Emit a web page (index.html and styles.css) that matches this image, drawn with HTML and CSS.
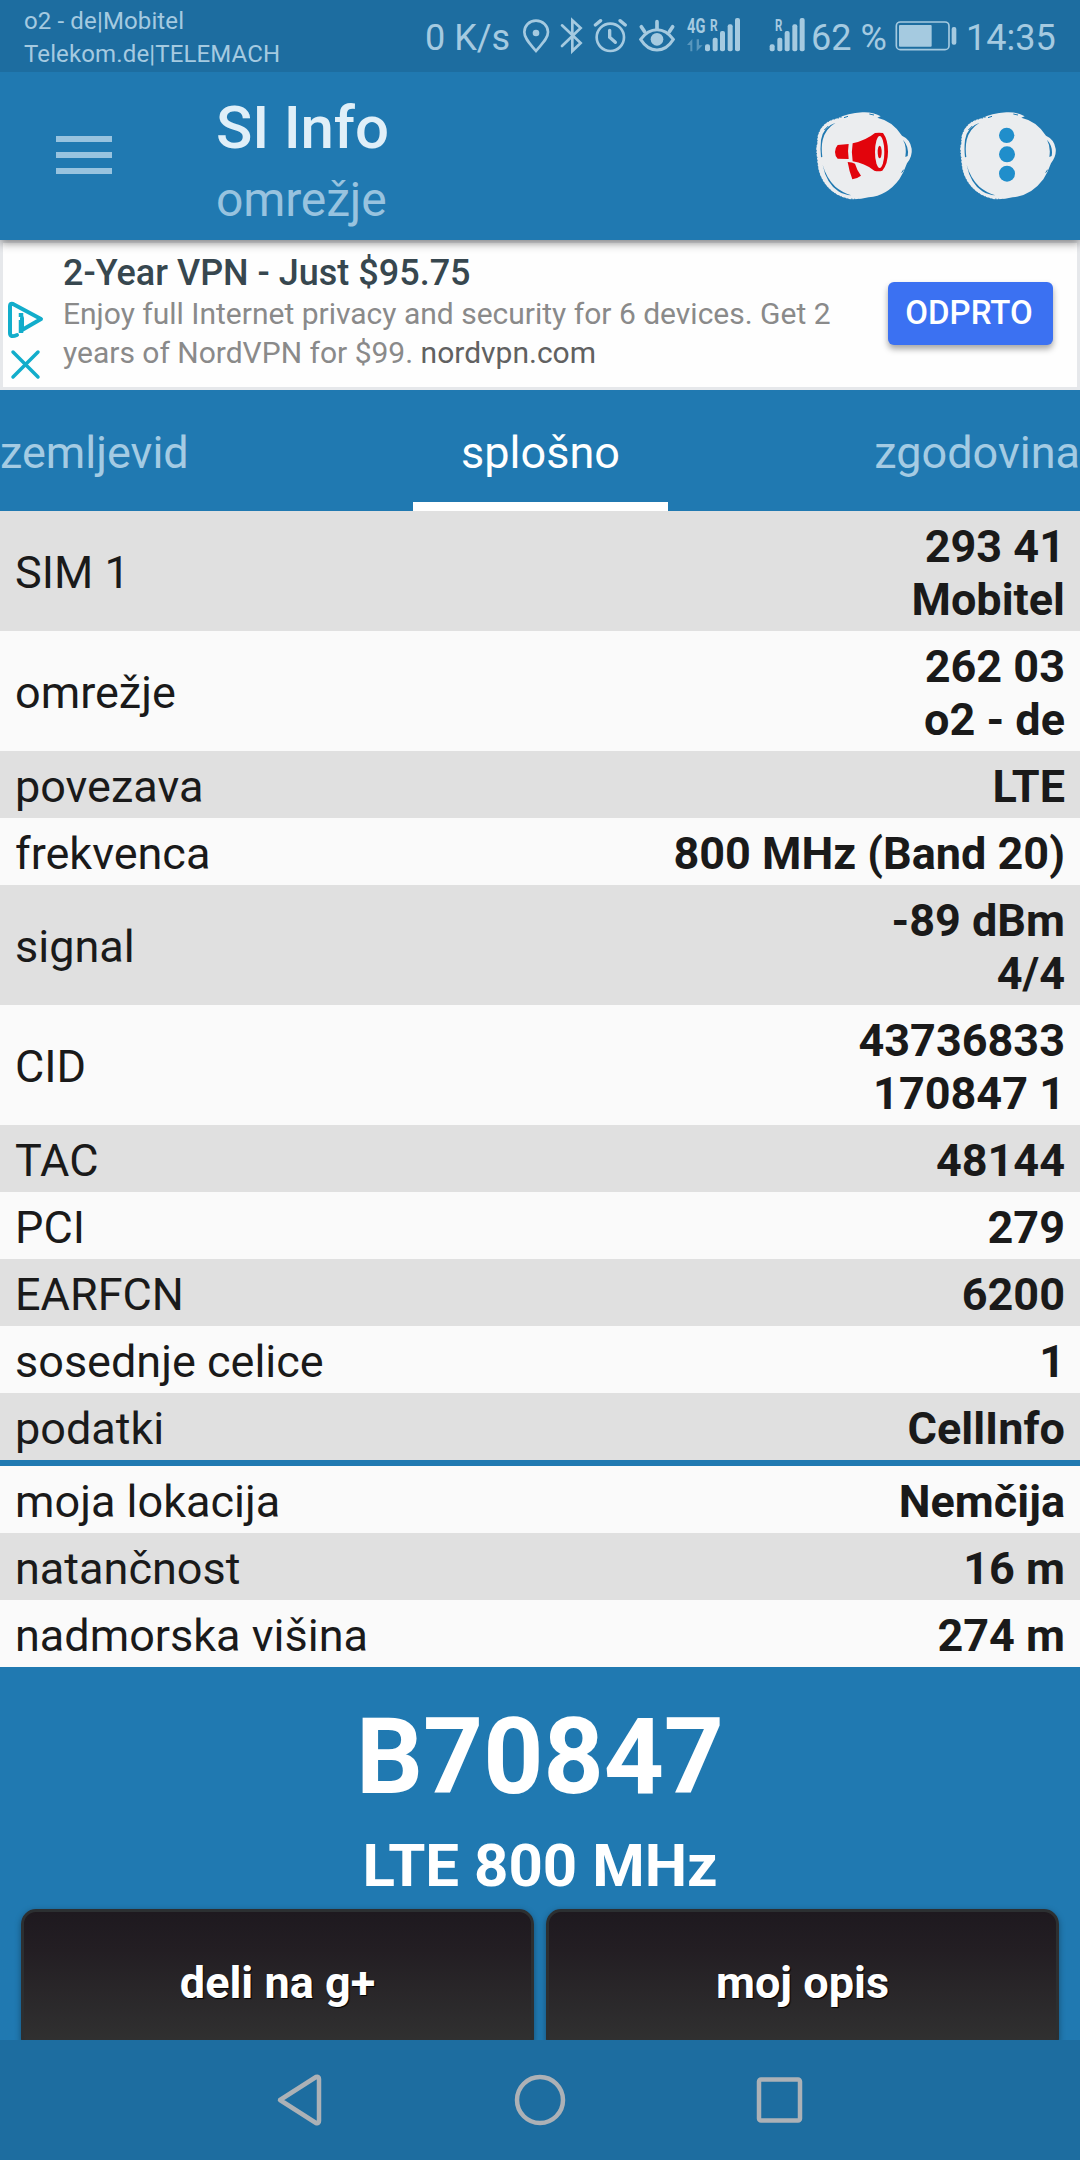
FILE: index.html
```html
<!DOCTYPE html>
<html lang="sl">
<head>
    <meta charset="UTF-8">
    <meta name="viewport" content="width=device-width, initial-scale=1">
    <title>SI Info</title>
    <link rel="stylesheet" href="styles.css">
</head>

<body>
    <div class="statusbar">
        <div class="carriers">
            <div><span class="carrier1">o2 - de|Mobitel</span></div>
            <div><span class="carrier2">Telekom.de|TELEMACH</span></div>
        </div>
        <span class="speed">0 K/s</span>
        <svg class="st-icons" width="222" height="56" viewBox="366 2 666 168">
            <!-- location -->
            <path d="M408 64c-20 0-35 15-35 34 0 20 18 36 35 57 17-21 36-37 36-57 0-19-16-34-36-34z" fill="none" stroke="#a5cae0" stroke-width="8"/>
            <circle cx="408" cy="101" r="10"/>
            <!-- bluetooth -->
            <path d="M486 78l56 53-25 24V63l25 23-56 54" fill="none" stroke="#a5cae0" stroke-width="8" stroke-linecap="round"/>
            <!-- alarm -->
            <g fill="none" stroke="#a5cae0" stroke-width="8" stroke-linecap="round">
                <circle cx="631" cy="114" r="41"/>
                <path d="M629 93v21l17 15M586 77l16-13M660 64l16 13" stroke-width="10"/>
            </g>
            <!-- eye -->
            <g fill="none" stroke="#a5cae0" stroke-width="9" stroke-linecap="round">
                <path d="M722 120q21-29 49-29t49 29q-20 32-49 32t-49-32z"/>
                <path d="M771 67v22M724 82l10 15M818 82l-10 15" stroke-width="11"/>
            </g>
            <circle cx="771" cy="120" r="19"/>
            <!-- sim 1 -->
            <text x="861" y="101" font-size="60" textLength="55" lengthAdjust="spacingAndGlyphs">4G</text>
            <text x="930" y="94" font-size="50" textLength="23" lengthAdjust="spacingAndGlyphs">R</text>
            <path d="M861 137l16-18v37h-6v-19zM890 120v36l18-18h-11v-18z" opacity=".45"/>
            <rect x="915" y="135" width="15" height="21" rx="6"/>
            <rect x="938" y="115" width="15" height="41" rx="6"/>
            <rect x="960" y="95" width="15" height="61" rx="6"/>
            <rect x="983" y="75" width="15" height="81" rx="6"/>
            <rect x="1005" y="56" width="15" height="100" rx="6"/>
        </svg>
        <svg class="st-sim" width="40" height="56" viewBox="85 2 120 168">
            <text x="106" y="94" font-size="50" textLength="22" lengthAdjust="spacingAndGlyphs">R</text>
            <rect x="90" y="135" width="15" height="21" rx="6"/>
            <rect x="113" y="115" width="15" height="41" rx="6"/>
            <rect x="135" y="95" width="15" height="61" rx="6"/>
            <rect x="158" y="75" width="15" height="81" rx="6"/>
            <rect x="180" y="56" width="15" height="100" rx="6"/>
        </svg>
        <span class="percent">62 %</span>
        <svg class="st-batt" width="62" height="56" viewBox="466 2 186 168">
            <rect x="470" y="68" width="158" height="83" rx="12" fill="none" stroke="#a5cae0" stroke-width="5"/>
            <rect x="478" y="77" width="98" height="65" rx="3"/>
            <rect x="636" y="83" width="14" height="53" rx="6"/>
        </svg>
        <span class="clock">14:35</span>
    </div>

    <header class="appbar">
        <div class="burger"><i></i><i></i><i></i></div>
        <div class="titles">
            <h1>SI Info</h1>
            <div class="sub">omrežje</div>
        </div>
        <svg class="blob" width="98" height="92" viewBox="105 60 294 276">
            <g id="splash">
                <path fill="#ebedef" d="M302 79q-25-14-55-12-45 3-74 18-32 5-50 30-14 22-11 43-5 12-3 27l4 40q4 40 33 70 25 25 60 32 28 3 60-5 55-4 92-54 14-22 23-48 17-22 14-44-4-28-29-39-28-44-74-54z"/>
                <path fill="#2079b1" d="M167 98q-38 12-44 52-3 28 0 52l4-1q-4-28 1-51 8-34 39-52zM128 225q11 55 47 79 18 11 39 12-28-9-48-26-26-24-38-65zM369 149q12 22 7 52l7-3q5-28-14-49z"/>
                <path fill="none" stroke="#2079b1" stroke-width="3" stroke-dasharray="4 5 3 8" d="M185 81l-12 4q-32 5-50 30-14 22-11 43-5 12-3 27l4 40q4 40 33 70 25 25 60 32l30 1"/>
                <path fill="none" stroke="#2079b1" stroke-width="3" d="M192 83l12-4M268 72l14 3M133 120l12-12M365 248l6-9"/>
            </g>
            <path fill="#e2040c" d="M173 165l33-3q-4 22 0 45l-33-1q-8-8-8-20t8-21zM218 160q40-9 67-31 12-2 24 0 15 20 15 56t-17 57q-12 3-24 0-30-23-65-28-5-26 0-54z"/>
            <ellipse cx="299" cy="186" rx="14" ry="48" fill="#ebedef"/>
            <ellipse cx="299" cy="186" rx="6" ry="19" fill="#e2040c"/>
            <path fill="#e2040c" d="M203 216q14 1 22 5 5 18 18 36-12 9-26 11-9-22-14-52z"/>
        </svg>
        <svg class="blob" width="98" height="92" viewBox="105 60 294 276">
            <use href="#splash"/>
            <g fill="#208ecb">
                <circle cx="248" cy="136" r="23"/>
                <circle cx="249" cy="193" r="24"/>
                <circle cx="249" cy="251" r="24"/>
            </g>
        </svg>
    </header>

    <section class="ad">
        <svg class="adchoices" width="36" height="80" viewBox="8 301 36 80" fill="none" stroke="#12adcb" stroke-width="4">
            <path d="M17 335q-7 3-7-2v-27q0-3 3-2l28 15-19 11v-12" stroke-linejoin="round" stroke-linecap="round"/>
            <path d="M21 313v4M21 320v13" stroke-width="4.500"/>
            <path d="M13 352l25 25M38 352l-25 25" stroke-width="3.500" stroke-linecap="round"/>
        </svg>
        <div class="ad-text">
            <div class="ad-title">2-Year VPN - Just $95.75</div>
            <div class="ad-desc">Enjoy full Internet privacy and security for 6 devices. Get 2<br>years of NordVPN for $99. <span>nordvpn.com</span></div>
        </div>
        <div class="ad-btn">ODPRTO</div>
    </section>

    <nav class="tabs">
        <div class="tab">zemljevid</div>
        <div class="tab active">splošno</div>
        <div class="tab">zgodovina</div>
    </nav>

    <main class="rows">
        <div class="row odd two"><span>SIM 1</span><b>293 41<br>Mobitel</b></div>
        <div class="row two"><span>omrežje</span><b>262 03<br>o2 - de</b></div>
        <div class="row odd"><span>povezava</span><b>LTE</b></div>
        <div class="row"><span>frekvenca</span><b>800 MHz (Band 20)</b></div>
        <div class="row odd two"><span>signal</span><b>-89 dBm<br>4/4</b></div>
        <div class="row two"><span>CID</span><b>43736833<br>170847 1</b></div>
        <div class="row odd"><span>TAC</span><b>48144</b></div>
        <div class="row"><span>PCI</span><b>279</b></div>
        <div class="row odd"><span>EARFCN</span><b>6200</b></div>
        <div class="row"><span>sosednje celice</span><b>1</b></div>
        <div class="row odd"><span>podatki</span><b>CellInfo</b></div>
        <div class="row line"><span>moja lokacija</span><b>Nemčija</b></div>
        <div class="row odd"><span>natančnost</span><b>16 m</b></div>
        <div class="row"><span>nadmorska višina</span><b>274 m</b></div>
    </main>

    <section class="bottom">
        <div class="cell">B70847</div>
        <div class="band">LTE 800 MHz</div>
        <div class="buttons">
            <div class="btn">deli na g+</div>
            <div class="btn">moj opis</div>
        </div>
    </section>

    <div class="navbar">
        <svg width="50" height="52" viewBox="0 0 50 52"><path d="M4 26L40 3q3-1 3 2v42q0 3-3 2z"/></svg>
        <svg width="52" height="52" viewBox="0 0 52 52"><circle cx="26" cy="26" r="23"/></svg>
        <svg width="50" height="52" viewBox="0 0 50 52"><rect x="4" y="5.500" width="41" height="41" rx="2"/></svg>
    </div>
</body>
</html>
```

FILE: styles.css
```css
* { box-sizing: border-box; }

body {
    margin: 0;
    width: 1080px;
    height: 2160px;
    overflow: hidden;
    display: flex;
    flex-direction: column;
    font-family: Roboto, "Liberation Sans", sans-serif;
    font-size: 45px;
    background: #2079b1;
    color: #1a1a1a;
    white-space: nowrap;
}

svg { display: block; flex: none; }

/* status bar */
.statusbar {
    height: 72px;
    flex: none;
    display: flex;
    background: #1d6da0;
    color: #a5cae0;
    font-size: 36px;
    line-height: 76px;
}
.statusbar svg { fill: #a5cae0; }
.statusbar text { font-family: Roboto, sans-serif; font-weight: 700; }
.carriers {
    width: 401px;
    margin-left: 24px;
    padding-top: 5px;
    font-size: 24px;
    line-height: 33px;
    letter-spacing: .13px;
}
.speed { width: 97px; }
.st-sim { margin-left: 24px; }
.percent { width: 84px; margin-left: 3px; }
.clock { margin-left: 9px; }

/* app bar */
.appbar {
    height: 168px;
    flex: none;
    display: flex;
    background: #2079b1;
    box-shadow: 0 3px 9px rgba(0, 0, 0, .45);
    clip-path: inset(0 0 -20px 0);
    position: relative;
    z-index: 1;
}
.burger {
    width: 56px;
    margin: 64px 0 0 56px;
    display: flex;
    flex-direction: column;
    gap: 10px;
}
.burger i { height: 6px; background: #98c3df; }
.titles {
    width: 599px;
    margin-left: 104px;
    padding-top: 20px;
}
h1 {
    margin: 0;
    font-size: 60px;
    font-weight: 500;
    line-height: 71px;
    letter-spacing: -.15px;
    color: #e0eff8;
}
.sub {
    font-size: 48px;
    line-height: 73px;
    letter-spacing: -.15px;
    color: #98c3df;
}
.blob { margin-top: 38px; }
.blob + .blob { margin-left: 46px; }

/* ad */
.ad {
    height: 150px;
    flex: none;
    display: flex;
    border: 3px solid #e6e8eb;
    background: #fefefe;
}
.adchoices { margin: 58px 0 0 5px; }
.ad-text { width: 825px; margin-left: 19px; padding-top: 9px; }
.ad-title {
    font-size: 36px;
    font-weight: 500;
    line-height: 42px;
    color: #37474f;
}
.ad-desc { font-size: 30px; line-height: 39px; color: #8a8a8a; }
.ad-desc span { color: #616161; }
.ad-btn {
    width: 165px;
    height: 63px;
    margin-top: 39px;
    padding-right: 3px;
    border-radius: 6px;
    background: #3b71f2;
    box-shadow: 0 4px 6px rgba(0, 0, 0, .35);
    color: #fff;
    font-size: 33px;
    font-weight: 500;
    line-height: 62px;
    text-align: center;
}

/* tabs */
.tabs {
    height: 121px;
    flex: none;
    display: grid;
    grid-template-columns: 413px 255px 412px;
    line-height: 125px;
    color: #a4cbe3;
}
.tab { height: 121px; }
.tab.active { text-align: center; color: #fff; border-bottom: 9px solid #fff; }
.tab:last-child { text-align: right; }

/* table */
.row {
    display: flex;
    justify-content: space-between;
    align-items: center;
    padding: 9px 15px 5px;
    line-height: 53px;
    background: #fafafa;
}
.row.odd { background: #e0e0e0; }
.row.line { border-top: 6px solid #2079b1; }
.row.two span { padding-bottom: 2px; }
.row b { text-align: right; }

/* bottom */
.bottom {
    height: 373px;
    flex: none;
    overflow: hidden;
    padding-top: 29px;
    text-align: center;
    color: #fff;
    font-weight: 700;
}
.cell { font-size: 105px; line-height: 123px; }
.band { font-size: 60px; line-height: 70px; margin: 12px 0 8px; }
.buttons { display: flex; gap: 12px; padding: 0 21px; }
.btn {
    flex: 1;
    height: 144px;
    border: 3px solid #2c2f31;
    border-radius: 15px;
    background: linear-gradient(#1e191f, #231e23 28%, #303030 92%);
    box-shadow: 0 2px 6px rgba(0, 0, 0, .35);
    line-height: 141px;
    text-shadow: 1px 1px 1px #000;
}

.navbar {
    height: 120px;
    flex: none;
    display: flex;
    gap: 188px;
    padding: 34px 0 0 276px;
    background: #1d6da0;
}
.navbar svg { fill: none; stroke: #acb1b6; stroke-width: 4.500; stroke-linejoin: round; }
.navbar svg:last-child { margin-left: 1px; }
```
